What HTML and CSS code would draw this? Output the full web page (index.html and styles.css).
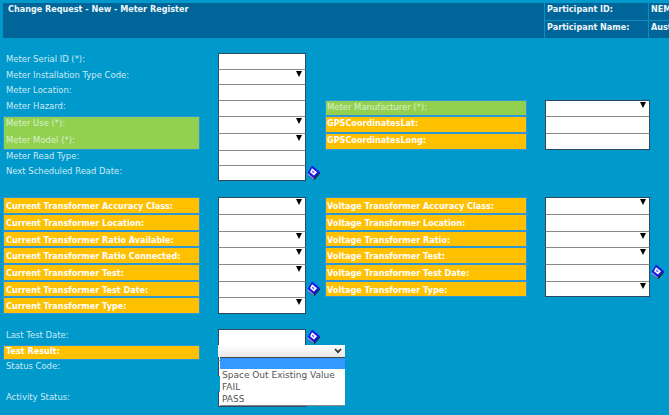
FILE: index.html
```html
<!DOCTYPE html>
<html lang="en">
<head>
<meta charset="utf-8">
<title>Change Request - New - Meter Register</title>
<link rel="stylesheet" href="styles.css">
</head>
<body>
<svg class="defs" width="0" height="0" aria-hidden="true">
  <symbol id="cal" viewBox="0 0 14 14" preserveAspectRatio="none">
    <polygon points="1,10 7.5,14 13,8 13,6.5 7,11.5 1,8" fill="#222"/>
    <polygon points="5,0.5 13,6.5 7,12.5 0.5,7.5" fill="#1a1ae6"/>
    <polygon points="5,3 10,6.8 7,9.8 3,6.8" fill="#fff"/>
    <polygon points="5.6,5.2 7.6,6.8 6.6,7.8 4.8,6.5" fill="#5a6ae8"/>
    <polygon points="0.5,7.5 7,12.5 7,13.6 0.8,9.5" fill="#9aa6f0"/>
  </symbol>
</svg>
<header class="head">
  <div class="title">Change Request - New - Meter Register</div>
  <div class="hcell">Participant ID:</div>
  <div class="hcell">NEM</div>
  <div class="hcell">Participant Name:</div>
  <div class="hcell">Aust</div>
</header>

<main>
  <section class="grid s1">
    <div class="c1 lbl">Meter Serial ID (*):</div>
    <div class="c3 fld top"></div>
    <div class="c1 lbl">Meter Installation Type Code:</div>
    <div class="c3 fld drop"></div>
    <div class="c1 lbl">Meter Location:</div>
    <div class="c3 fld"></div>
    <div class="c1 lbl">Meter Hazard:</div>
    <div class="c3 fld"></div>
    <div class="c5 lbl green boxed">Meter Manufacturer (*):</div>
    <div class="c7 fld drop top"></div>
    <div class="c1 greenblock">
      <div class="lbl">Meter Use (*):</div>
      <div class="lbl">Meter Model (*):</div>
    </div>
    <div class="c3 fld drop"></div>
    <div class="c5 lbl orange boxed">GPSCoordinatesLat:</div>
    <div class="c7 fld"></div>
    <div class="c3 fld drop"></div>
    <div class="c5 lbl orange boxed">GPSCoordinatesLong:</div>
    <div class="c7 fld bottom"></div>
    <div class="c1 lbl">Meter Read Type:</div>
    <div class="c3 fld"></div>
    <div class="c1 lbl">Next Scheduled Read Date:</div>
    <div class="c3 fld bottom"></div>
    <svg class="c4 cal"><use href="#cal"/></svg>
  </section>

  <section class="grid s2">
    <div class="c1 lbl orange">Current Transformer Accuracy Class:</div>
    <div class="c3 fld drop top"></div>
    <div class="c5 lbl orange boxed">Voltage Transformer Accuracy Class:</div>
    <div class="c7 fld drop top"></div>
    <div class="c1 lbl orange">Current Transformer Location:</div>
    <div class="c3 fld"></div>
    <div class="c5 lbl orange boxed">Voltage Transformer Location:</div>
    <div class="c7 fld"></div>
    <div class="c1 lbl orange">Current Transformer Ratio Available:</div>
    <div class="c3 fld drop"></div>
    <div class="c5 lbl orange boxed">Voltage Transformer Ratio:</div>
    <div class="c7 fld drop"></div>
    <div class="c1 lbl orange">Current Transformer Ratio Connected:</div>
    <div class="c3 fld drop"></div>
    <div class="c5 lbl orange boxed">Voltage Transformer Test:</div>
    <div class="c7 fld drop"></div>
    <div class="c1 lbl orange">Current Transformer Test:</div>
    <div class="c3 fld drop"></div>
    <div class="c5 lbl orange boxed">Voltage Transformer Test Date:</div>
    <div class="c7 fld"></div>
    <svg class="c8 cal"><use href="#cal"/></svg>
    <div class="c1 lbl orange">Current Transformer Test Date:</div>
    <div class="c3 fld"></div>
    <svg class="c4 cal"><use href="#cal"/></svg>
    <div class="c5 lbl orange boxed">Voltage Transformer Type:</div>
    <div class="c7 fld drop bottom"></div>
    <div class="c1 lbl orange">Current Transformer Type:</div>
    <div class="c3 fld drop bottom"></div>
  </section>

  <section class="grid s3">
    <div class="c1 lbl">Last Test Date:</div>
    <div class="c3 fld top"></div>
    <svg class="c4 cal"><use href="#cal"/></svg>
    <div class="c1 lbl orange">Test Result:</div>
    <div class="c3 fld"></div>
    <div class="c1 lbl">Status Code:</div>
    <div class="c3 fld"></div>
    <div class="c1 spacer"></div>
    <div class="c1 lbl">Activity Status:</div>
    <div class="c3 fld bottom"></div>
    <div class="combo">
      <div class="combo-box">
        <svg class="chev" viewBox="0 0 8 6" width="8" height="6"><path d="M1 1 L4 4.2 L7 1" fill="none" stroke="#333" stroke-width="1.8"/></svg>
      </div>
      <ul class="list">
        <li class="sel">&nbsp;</li>
        <li>Space Out Existing Value</li>
        <li>FAIL</li>
        <li>PASS</li>
      </ul>
    </div>
  </section>
</main>
</body>
</html>
```
FILE: styles.css
```css
* { box-sizing: border-box; }
html, body { margin: 0; height: 100%; overflow: hidden; }
body {
  background: #0099cc;
  padding: 3px 0 0 3px;
  font-family: "DejaVu Sans", Verdana, sans-serif;
  font-size: 8.45px;
  color: #cfe9f3;
}
.defs { position: absolute; }

.head {
  display: grid;
  grid-template-columns: 541px 1fr 20px;
  grid-template-rows: 17px 17px;
  column-gap: 1px;
  row-gap: 1px;
  width: 666px;
  height: 35px;
  background: #0f8fc0;
  font-weight: bold;
  font-size: 8.1px;
  color: #eef6fa;
}
.title {
  grid-row: span 2;
  background: #006699;
  padding: 0 5px;
  line-height: 13px;
}
.hcell {
  background: #006699;
  padding: 0 2px;
  line-height: 13px;
  white-space: nowrap;
  overflow: hidden;
}

.grid {
  display: grid;
  grid-template-columns: 197px 18px 88px 19px 202px 18px 105px 19px;
  position: relative;
}
.s1 { margin-top: 15px; grid-template-rows: 16px 15px 16px 16px 17px 17px 15px 16px; }
.s2 { margin-top: 16px; grid-template-rows: 17px 17px 16px 17px 17px 16px 17px; }
.s3 { margin-top: 15px; grid-template-rows: 16px 15px 16px 15px 16px; }

.c1 { grid-column: 1; }
.c3 { grid-column: 3; }
.c4 { grid-column: 4; }
.c5 { grid-column: 5; }
.c7 { grid-column: 7; }
.c8 { grid-column: 8; }

.lbl {
  padding: 0 3px;
  line-height: 12px;
  white-space: nowrap;
}
.orange {
  background: #ffc000;
  border: 1px solid #2f96d6;
  color: #fff;
  font-weight: bold;
  font-size: 8.1px;
  padding: 0 2px;
}
.s2 .orange { padding-top: 2px; }
.green {
  background: #92d050;
  color: #d9f0cf;
  border: 1px solid #2f96d6;
  padding: 0 2px;
}
.orange.boxed, .green.boxed { padding-left: 1px; }
.greenblock {
  grid-row: span 2;
  background: #92d050;
  color: #d9f0cf;
  border: 1px solid #2f96d6;
}
.greenblock .lbl { height: 17px; padding: 0 2px; }
.s3 .orange { line-height: 10px; }
.spacer { height: 15px; }

.fld {
  background: #fff;
  border-left: 1px solid #2c4a5c;
  border-right: 1px solid #2c4a5c;
  border-top: 1px solid #8a8a8a;
  position: relative;
}
.top { border-top-color: #2c4a5c; }
.bottom { border-bottom: 1px solid #2c4a5c; }
.drop::after {
  content: "";
  position: absolute;
  top: 1px;
  right: 3px;
  border-left: 3.5px solid transparent;
  border-right: 3.5px solid transparent;
  border-top: 6px solid #000;
}
.cal { width: 14px; height: 15px; margin: 0 0 0 1px; }

.combo {
  position: absolute;
  left: 215px;
  top: 16px;
  width: 127px;
  color: #555;
  font-size: 9px;
}
.combo-box {
  height: 12px;
  background: linear-gradient(#fff, #e8e8e8);
  display: flex;
  justify-content: flex-end;
  align-items: center;
  padding-right: 3px;
}
.list {
  list-style: none;
  margin: 0 0 0 2px;
  padding: 0;
  background: #fff;
  border-top: 1px solid #444;
  border-bottom: 1px solid #888;
  height: 49px;
}
.list li { height: 12px; line-height: 12px; padding-left: 2px; white-space: nowrap; }
.list .sel { height: 11px; background: #3399ff; }
```
